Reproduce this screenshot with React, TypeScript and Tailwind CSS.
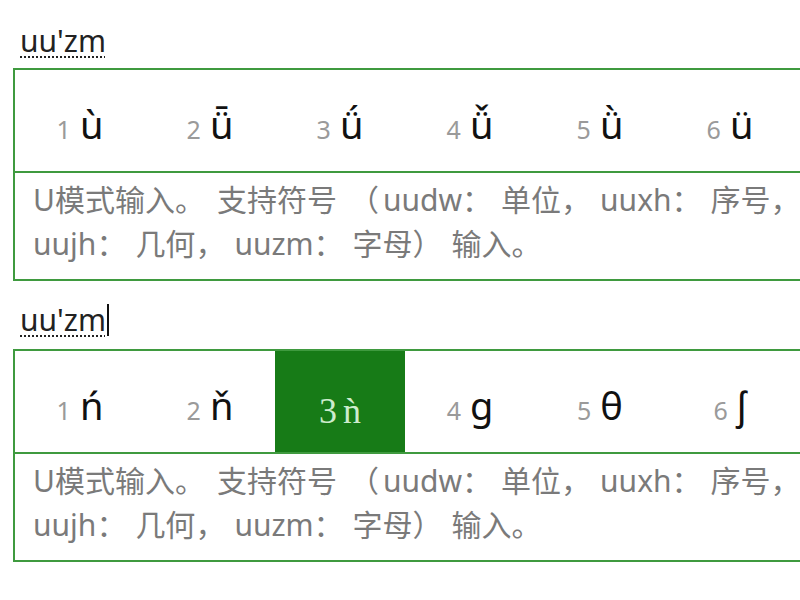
const row1 = ["ù", "ǖ", "ǘ", "ǚ", "ǜ", "ü"];
const row2 = ["ń", "ň", "ǹ", "ɡ", "θ", "ʃ"];

// wide full-width punctuation, as the IME font sets it
function Wide({ text }: { text: string }) {
  return (
    <>
      {text.split(/([。（），：])/).map((part, i) =>
        part === "（" ? (
          <span key={i} className="ml-[12px] mr-[4px]">{part}</span>
        ) : part === "。" ? (
          <span key={i} className="mr-[12px]">{part}</span>
        ) : /^[），：]$/.test(part) ? (
          <span key={i} className="mr-[9px]">{part}</span>
        ) : (
          part
        )
      )}
    </>
  );
}

function Candidates({ items, active }: { items: string[]; active?: number }) {
  return (
    <div className="flex h-[101px]">
      {items.map((c, i) =>
        i === active ? (
          <div
            key={i}
            className="flex w-[130px] items-center justify-center bg-[#177b17] pt-[18px] font-['Liberation_Serif',serif] text-[#cdeccd]"
          >
            <span className="text-[36px] leading-[40px]">{i + 1}</span>
            <span className="ml-[6px] text-[36px] leading-[40px]">{c}</span>
          </div>
        ) : (
          <div key={i} className="flex w-[130px] items-baseline justify-center self-center pt-[8px]">
            <span className="text-[25px] text-[#9a9a9a]">{i + 1}</span>
            <span className="ml-[9px] text-[38px] text-[#111]">{c}</span>
          </div>
        )
      )}
    </div>
  );
}

function Panel({ items, active }: { items: string[]; active?: number }) {
  return (
    <div className="w-[830px] border-2 border-[#3f9a3f]">
      <Candidates items={items} active={active} />
      <div className="h-[108px] whitespace-nowrap border-t-2 border-[#3f9a3f] pl-[18px] pt-[5px] text-[30px] leading-[44px] text-[#7a7a7a]">
        <div>
          <Wide text="U模式输入。支持符号（uudw：单位，uuxh：序号，" />
        </div>
        <div>
          <Wide text="uujh：几何，uuzm：字母）输入。" />
        </div>
      </div>
    </div>
  );
}

function Label({ caret }: { caret?: boolean }) {
  return (
    <div className="flex h-[40px] items-center pl-[7px] text-[30px] leading-[40px] text-[#222]">
      <span className="underline decoration-dotted decoration-[1.5px] underline-offset-[4px]">uu'zm</span>
      {caret && <span className="ml-[1px] inline-block h-[32px] w-[2px] bg-[#111]" />}
    </div>
  );
}

export default function App() {
  return (
    <div className="h-[600px] w-[800px] overflow-hidden bg-white pl-[13px] pt-[21px] font-['Noto_Sans','Noto_Sans_CJK_SC',sans-serif]">
      <Label />
      <div className="mt-[7px]">
        <Panel items={row1} />
      </div>
      <div className="mt-[19px]">
        <Label caret />
      </div>
      <div className="mt-[9px]">
        <Panel items={row2} active={2} />
      </div>
    </div>
  );
}
